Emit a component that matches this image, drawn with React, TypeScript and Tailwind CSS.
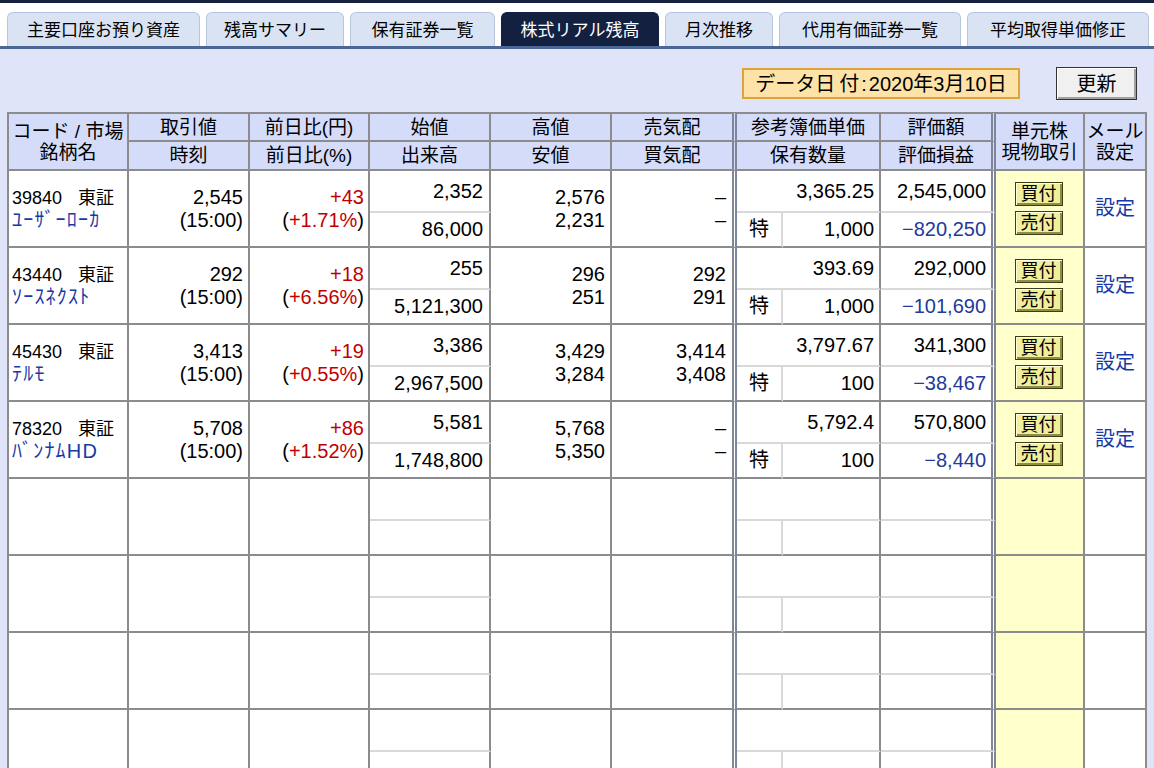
import React from "react";

const tabs = [
  { label: "主要口座お預り資産", w: "w-[193px]" },
  { label: "残高サマリー", w: "w-[138px]" },
  { label: "保有証券一覧", w: "w-[145px]" },
  { label: "株式リアル残高", w: "w-[158px]", active: true },
  { label: "月次推移", w: "w-[108px]" },
  { label: "代用有価証券一覧", w: "w-[182px]" },
  { label: "平均取得単価修正", w: "w-[182px]" },
];

type Row = {
  code: string;
  name: string;
  price: string;
  chg: string;
  pct: string;
  open: string;
  vol: string;
  high: string;
  low: string;
  ask: string;
  bid: string;
  cost: string;
  qty: string;
  val: string;
  pl: string;
};

const rows: Row[] = [
  { code: "39840", name: "ﾕｰｻﾞｰﾛｰｶ", price: "2,545", chg: "+43", pct: "+1.71%", open: "2,352", vol: "86,000", high: "2,576", low: "2,231", ask: "–", bid: "–", cost: "3,365.25", qty: "1,000", val: "2,545,000", pl: "−820,250" },
  { code: "43440", name: "ｿｰｽﾈｸｽﾄ", price: "292", chg: "+18", pct: "+6.56%", open: "255", vol: "5,121,300", high: "296", low: "251", ask: "292", bid: "291", cost: "393.69", qty: "1,000", val: "292,000", pl: "−101,690" },
  { code: "45430", name: "ﾃﾙﾓ", price: "3,413", chg: "+19", pct: "+0.55%", open: "3,386", vol: "2,967,500", high: "3,429", low: "3,284", ask: "3,414", bid: "3,408", cost: "3,797.67", qty: "100", val: "341,300", pl: "−38,467" },
  { code: "78320", name: "ﾊﾞﾝﾅﾑHD", price: "5,708", chg: "+86", pct: "+1.52%", open: "5,581", vol: "1,748,800", high: "5,768", low: "5,350", ask: "–", bid: "–", cost: "5,792.4", qty: "100", val: "570,800", pl: "−8,440" },
];

// grid line helpers
const cell = "p-0 border-r-2 border-b-2 border-[#8c8c8c]";
const dbl = "p-0 border-b-2 border-[#8c8c8c] border-r-[5px] border-r-[#80869a] [border-right-style:double]";
const head = "bg-[#d4dcfa] text-center text-[19px] leading-[21px] font-normal text-black";
const splitB = "border-b-[#d9d9d9]";

const TradeButton = ({ label }: { label: string }) => (
  <button className="w-[48px] h-[24px] bg-[#efef9c] border border-[#3d3d1c] shadow-[inset_1px_1px_0_#ffffe4,inset_-2px_-2px_0_#8f8f42] text-[18px] leading-none text-black flex items-center justify-center">
    {label}
  </button>
);

const App = () => {
  const empty = [0, 1, 2, 3];

  return (
    <div className="h-screen overflow-hidden bg-[#e0e4f8] font-['Liberation_Sans','Noto_Sans_CJK_JP',sans-serif] text-black">
      {/* Tabs */}
      <div className="bg-white border-t-[3px] border-t-[#15213f] border-b-[3px] border-b-[#4a6796] pt-[9px] pl-[7px] flex gap-[6px]">
        {tabs.map((t) => (
          <div
            key={t.label}
            className={`${t.w} h-[34px] rounded-t-[6px] border border-b-0 flex items-center justify-center pt-[3px] text-[17px] ${
              t.active
                ? "bg-[#13203f] border-[#13203f] text-white"
                : "bg-[#dae3f3] border-[#b8c5df] text-black"
            }`}
          >
            {t.label}
          </div>
        ))}
      </div>

      {/* Toolbar */}
      <div className="h-[63px] flex justify-end items-start pt-[18px] pr-[17px]">
        <div className="mt-px w-[278px] h-[31px] border-2 border-[#e0a33a] bg-[#fde3a8] flex items-center justify-center text-[20px] leading-none">
          データ日<span className="ml-[4px]">付</span>
          <span className="mx-[2px]">:</span>2020年3月10日
        </div>
        <button className="ml-[36px] w-[81px] h-[33px] bg-[#f0f0f0] border border-[#333] shadow-[inset_1px_1px_0_#ffffff,inset_-2px_-2px_0_#a0a0a0] text-[20px] leading-none">
          更新
        </button>
      </div>

      {/* Table */}
      <table className="ml-[7px] w-[1140px] table-fixed border-separate border-spacing-0 bg-white">
        <colgroup>
          <col className="w-[122px]" />
          <col className="w-[121px]" />
          <col className="w-[120px]" />
          <col className="w-[121px]" />
          <col className="w-[121px]" />
          <col className="w-[125px]" />
          <col className="w-[46px]" />
          <col className="w-[98px]" />
          <col className="w-[115px]" />
          <col className="w-[89px]" />
          <col className="w-[62px]" />
        </colgroup>
        <thead>
          <tr className="h-[30px]">
            <th rowSpan={2} className={`${cell} ${head} border-l-2 border-t-2`}>
              コード / 市場
              <br />
              銘柄名
            </th>
            <th className={`${cell} ${head} border-t-2`}>取引値</th>
            <th className={`${cell} ${head} border-t-2`}>前日比(円)</th>
            <th className={`${cell} ${head} border-t-2`}>始値</th>
            <th className={`${cell} ${head} border-t-2`}>高値</th>
            <th className={`${dbl} ${head} border-t-2`}>売気配</th>
            <th colSpan={2} className={`${cell} ${head} border-t-2`}>参考簿価単価</th>
            <th className={`${dbl} ${head} border-t-2`}>評価額</th>
            <th rowSpan={2} className={`${cell} ${head} border-t-2`}>
              単元株
              <br />
              現物取引
            </th>
            <th rowSpan={2} className={`${cell} ${head} border-t-2`}>
              メール
              <br />
              設定
            </th>
          </tr>
          <tr className="h-[29px]">
            <th className={`${cell} ${head}`}>時刻</th>
            <th className={`${cell} ${head}`}>前日比(%)</th>
            <th className={`${cell} ${head}`}>出来高</th>
            <th className={`${cell} ${head}`}>安値</th>
            <th className={`${dbl} ${head}`}>買気配</th>
            <th colSpan={2} className={`${cell} ${head}`}>保有数量</th>
            <th className={`${dbl} ${head}`}>評価損益</th>
          </tr>
        </thead>
        <tbody className="text-[20px] leading-[23px]">
          {rows.map((r) => (
            <React.Fragment key={r.code}>
              <tr className="h-[42px]">
                <td rowSpan={2} className={`${cell} border-l-2 pl-[3px] align-middle`}>
                  <div className="text-[18px] leading-[23px] whitespace-nowrap">
                    {r.code}
                    <span className="ml-[16px]">東証</span>
                  </div>
                  <div className="text-[20px] leading-[21px] tracking-[1.2px] text-[#1739a6] whitespace-nowrap">
                    {r.name}
                  </div>
                </td>
                <td rowSpan={2} className={`${cell} text-right pr-[5px]`}>
                  <div>{r.price}</div>
                  <div>(15:00)</div>
                </td>
                <td rowSpan={2} className={`${cell} text-right pr-[4px]`}>
                  <div className="text-[#c00000]">{r.chg}</div>
                  <div>
                    (<span className="text-[#c00000]">{r.pct}</span>)
                  </div>
                </td>
                <td className={`${cell} ${splitB} text-right pr-[6px]`}>{r.open}</td>
                <td rowSpan={2} className={`${cell} text-right pr-[5px]`}>
                  <div>{r.high}</div>
                  <div>{r.low}</div>
                </td>
                <td rowSpan={2} className={`${dbl} text-right pr-[6px]`}>
                  <div>{r.ask}</div>
                  <div>{r.bid}</div>
                </td>
                <td colSpan={2} className={`${cell} ${splitB} text-right pr-[5px]`}>{r.cost}</td>
                <td className={`${dbl} ${splitB} text-right pr-[5px]`}>{r.val}</td>
                <td rowSpan={2} className={`${cell} bg-[#ffffcc]`}>
                  <div className="flex flex-col items-center gap-[5px] pr-[2px]">
                    <TradeButton label="買付" />
                    <TradeButton label="売付" />
                  </div>
                </td>
                <td rowSpan={2} className={`${cell} text-center text-[#1739a6]`}>
                  設定
                </td>
              </tr>
              <tr className="h-[35px]">
                <td className={`${cell} text-right pr-[6px]`}>{r.vol}</td>
                <td className={`${cell} border-r-[#d9d9d9] text-center`}>特</td>
                <td className={`${cell} text-right pr-[5px]`}>{r.qty}</td>
                <td className={`${dbl} text-right pr-[5px] text-[#23399c]`}>{r.pl}</td>
              </tr>
            </React.Fragment>
          ))}
          {empty.map((i) => (
            <React.Fragment key={i}>
              <tr className="h-[42px]">
                <td rowSpan={2} className={`${cell} border-l-2`} />
                <td rowSpan={2} className={cell} />
                <td rowSpan={2} className={cell} />
                <td className={`${cell} ${splitB}`} />
                <td rowSpan={2} className={cell} />
                <td rowSpan={2} className={dbl} />
                <td colSpan={2} className={`${cell} ${splitB}`} />
                <td className={`${dbl} ${splitB}`} />
                <td rowSpan={2} className={`${cell} bg-[#ffffcc]`} />
                <td rowSpan={2} className={cell} />
              </tr>
              <tr className="h-[35px]">
                <td className={cell} />
                <td className={`${cell} border-r-[#d9d9d9]`} />
                <td className={cell} />
                <td className={dbl} />
              </tr>
            </React.Fragment>
          ))}
        </tbody>
      </table>
    </div>
  );
};

export default App;
